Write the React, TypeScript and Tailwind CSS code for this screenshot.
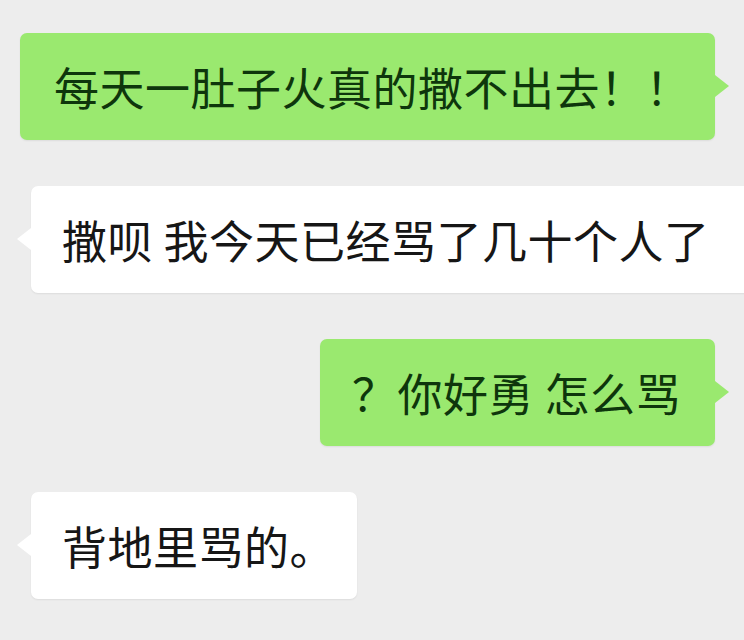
const font = { fontFamily: '"Noto Sans CJK SC", "Noto Sans", sans-serif' };

type Msg = { text: string; mine: boolean; width: string; pad: string };

const messages: Msg[] = [
  { text: '每天一肚子火真的撒不出去！！', mine: true, width: 'w-[695px]', pad: 'pl-[34px]' },
  { text: '撒呗 我今天已经骂了几十个人了', mine: false, width: 'w-[730px]', pad: 'pl-[31px]' },
  { text: '？你好勇 怎么骂', mine: true, width: 'w-[395px]', pad: 'pl-[32px]' },
  { text: '背地里骂的。', mine: false, width: 'w-[326px]', pad: 'pl-[31px]' },
];

const Bubble = ({ m }: { m: Msg }) => (
  <div className={`flex ${m.mine ? 'justify-end pr-[29px]' : 'justify-start pl-[31px]'}`}>
    <div
      className={`relative h-[107px] ${m.width} ${m.pad} shrink-0 flex items-center rounded-[7px] shadow-[0_1px_2px_rgba(0,0,0,0.07)] ${
        m.mine ? 'bg-[#9ae96f] text-[#0e360c]' : 'bg-white text-[#161616]'
      }`}
    >
      {/* tail */}
      {m.mine ? (
        <span className="absolute top-[42px] right-[-14px] w-0 h-0 border-y-[11px] border-y-transparent border-l-[14px] border-l-[#9ae96f]" />
      ) : (
        <span className="absolute top-[42px] left-[-14px] w-0 h-0 border-y-[11px] border-y-transparent border-r-[14px] border-r-white" />
      )}
      <span className="text-[45px] leading-none whitespace-nowrap tracking-[0.5px]">{m.text}</span>
    </div>
  </div>
);

export default function App() {
  return (
    <div className="w-[744px] h-[640px] overflow-hidden bg-[#ededed] pt-[33px] flex flex-col gap-[46px]" style={font}>
      {messages.map((m, i) => (
        <Bubble key={i} m={m} />
      ))}
    </div>
  );
}
